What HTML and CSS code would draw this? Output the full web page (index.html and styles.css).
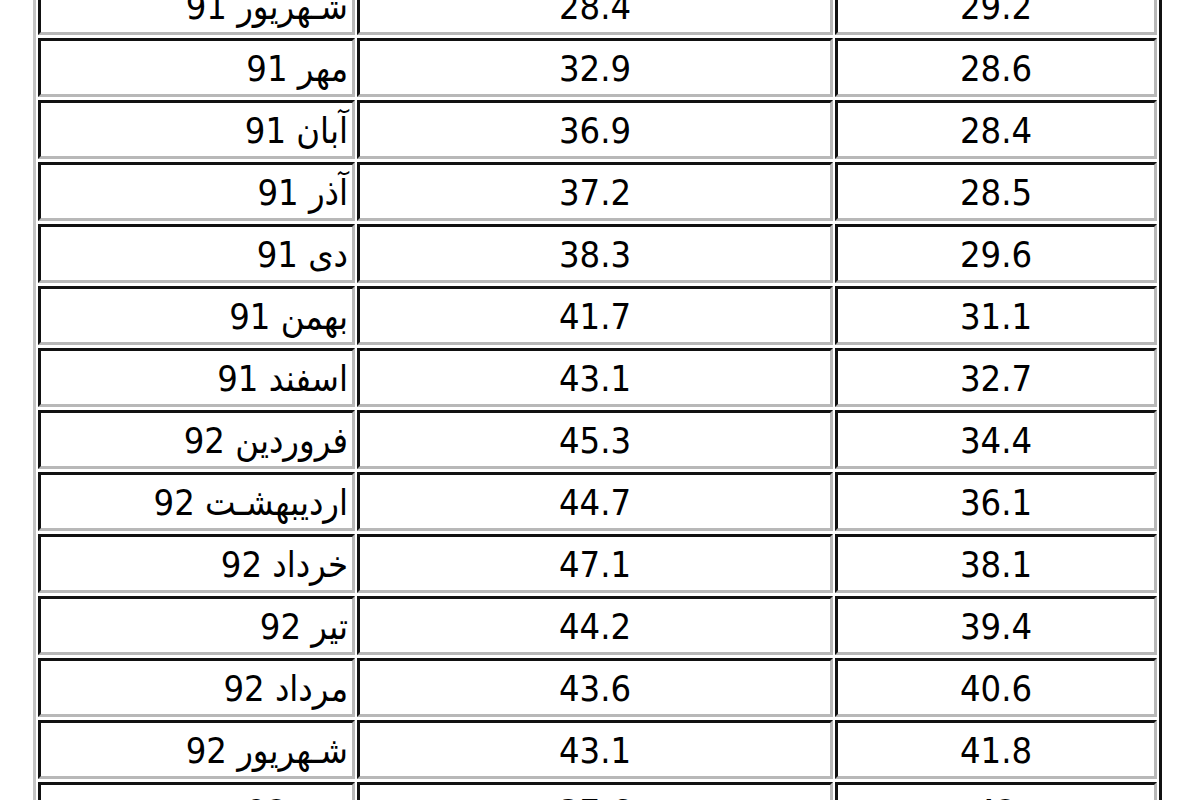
FILE: index.html
```html
<!DOCTYPE html>
<html lang="fa">
<head>
<meta charset="utf-8">
<title>جدول</title>
<link rel="stylesheet" href="styles.css">
</head>
<body>
<table class="data">
<colgroup><col class="c1"><col class="c2"><col class="c3"></colgroup>
<tbody>
<tr><td class="m">شـهریور 91</td><td>28.4</td><td>29.2</td></tr>
<tr><td class="m">مهر 91</td><td>32.9</td><td>28.6</td></tr>
<tr><td class="m">آبان 91</td><td>36.9</td><td>28.4</td></tr>
<tr><td class="m">آذر 91</td><td>37.2</td><td>28.5</td></tr>
<tr><td class="m">دی 91</td><td>38.3</td><td>29.6</td></tr>
<tr><td class="m">بهمن 91</td><td>41.7</td><td>31.1</td></tr>
<tr><td class="m">اسفند 91</td><td>43.1</td><td>32.7</td></tr>
<tr><td class="m">فروردین 92</td><td>45.3</td><td>34.4</td></tr>
<tr><td class="m">اردیبهشـت 92</td><td>44.7</td><td>36.1</td></tr>
<tr><td class="m">خرداد 92</td><td>47.1</td><td>38.1</td></tr>
<tr><td class="m">تیر 92</td><td>44.2</td><td>39.4</td></tr>
<tr><td class="m">مرداد 92</td><td>43.6</td><td>40.6</td></tr>
<tr><td class="m">شـهریور 92</td><td>43.1</td><td>41.8</td></tr>
<tr><td class="m">مهر 92</td><td>37.6</td><td>42</td></tr>
</tbody>
</table>
</body>
</html>
```
FILE: styles.css
```css
html, body {
  margin: 0;
  padding: 0;
  background: #fff;
  overflow: hidden;
}
body {
  height: 800px;
}
.data {
  margin: -30px 0 0 33px;
  width: 1129px;
  table-layout: fixed;
  border-collapse: separate;
  border-spacing: 2px 3px;
  border-style: solid;
  border-width: 3px;
  border-color: #c4c4c4 #111 #111 #c4c4c4;
  font-family: "DejaVu Sans Condensed", "DejaVu Sans", sans-serif;
  font-stretch: condensed;
  font-size: 36px;
  color: #000;
}
.c1 { width: 317px; }
.c2 { width: 476px; }
.c3 { width: 322px; }
.data td {
  height: 51px;
  padding: 2px 4px 0;
  border-style: solid;
  border-width: 3px;
  border-color: #111 #b8b8b8 #b8b8b8 #111;
  text-align: center;
  vertical-align: middle;
  line-height: 1;
  white-space: nowrap;
}
.data td.m {
  text-align: right;
  direction: rtl;
}
```
